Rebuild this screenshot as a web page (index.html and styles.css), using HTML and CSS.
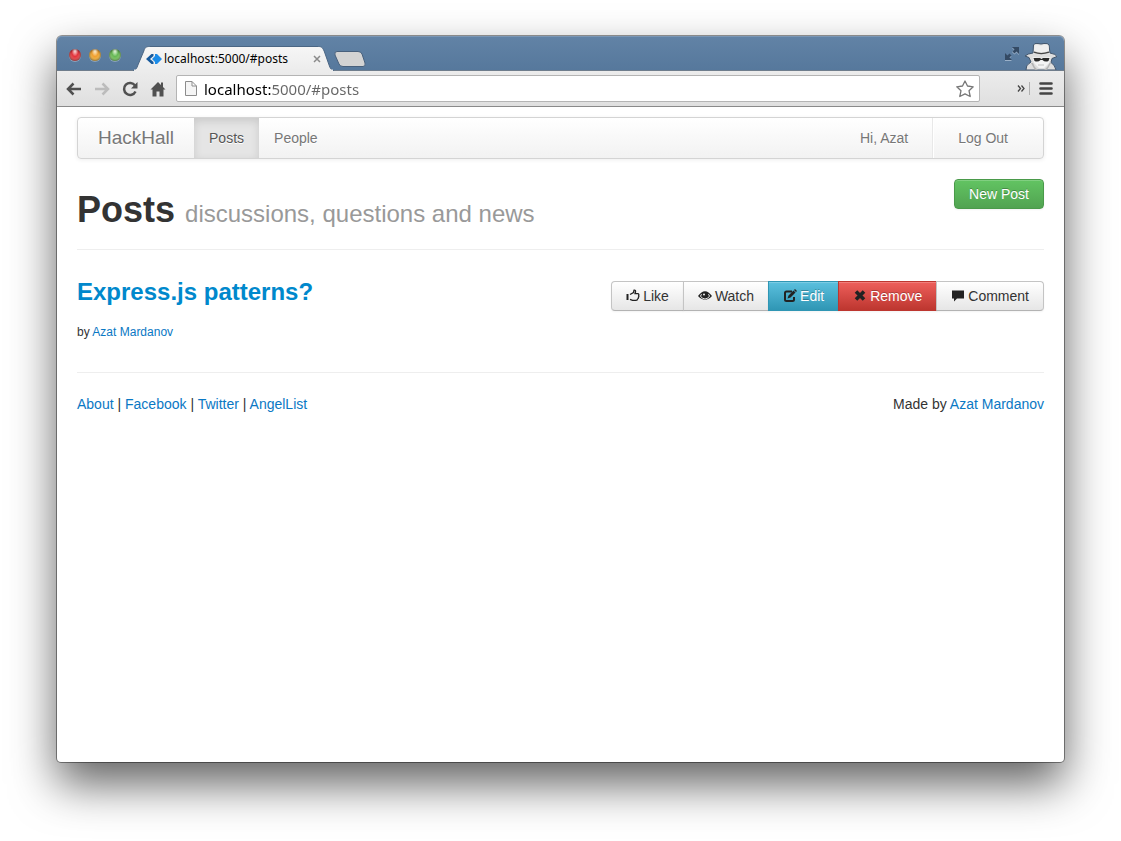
FILE: index.html
```html
<!DOCTYPE html>
<html lang="en">
<head>
    <meta charset="UTF-8">
    <meta name="viewport" content="width=device-width, initial-scale=1.0">
    <title>HackHall</title>
    <link rel="stylesheet" href="styles.css">
</head>
<body>
<div class="window">

    <div class="titlebar">
        <div class="lights">
            <button class="light red" type="button" aria-label="Close"></button>
            <button class="light yellow" type="button" aria-label="Minimize"></button>
            <button class="light green" type="button" aria-label="Zoom"></button>
        </div>
        <div class="tab">
            <svg class="tab-shape" viewBox="0 0 204 25" preserveAspectRatio="none" aria-hidden="true">
                <defs><linearGradient id="tabfill" x1="0" y1="0" x2="0" y2="1"><stop offset="0" stop-color="#f6f6f6"/><stop offset="1" stop-color="#ececec"/></linearGradient></defs>
                <path d="M0 25 C3 24 4 22 5 19 L11 5 C12 1 14 .5 17 .5 H188 C191 .5 192 1 194 5 L199 19 C200 22 201 24 204 25 Z" fill="url(#tabfill)" stroke="#4a6583" stroke-width="1"/>
                <path d="M1 24.5 H203" stroke="#ececec" stroke-width="2"/>
            </svg>
            <svg class="favicon" width="16" height="12" viewBox="0 0 16 12" aria-hidden="true">
                <path d="M5.500 1 L0 6 L5.500 11 H7.500 V9 L4 6 L7.500 3 V1 Z" fill="#16599c"/>
                <path d="M9 1 H11 L16 6 L11 11 H9 V9 L6 6 L9 3 Z" fill="#1c8ce8"/>
            </svg>
            <span class="tab-title">localhost:5000/#posts</span>
            <button class="tab-close" type="button" aria-label="Close tab">
                <svg width="8" height="8" viewBox="0 0 8 8"><path d="M1 1 L7 7 M7 1 L1 7" stroke="#8a8a8a" stroke-width="1.500"/></svg>
            </button>
        </div>
        <button class="new-tab" type="button" aria-label="New tab">
            <svg width="32" height="16" viewBox="0 0 32 16"><path d="M3 .5 H24 Q27 .5 28 3 L31 12 Q32 15.500 29 15.500 H9 Q6 15.500 5 13 L1 4 Q0 .5 3 .5 Z" fill="#d3d3d3" stroke="#48607c"/></svg>
        </button>
        <button class="fullscreen" type="button" aria-label="Full screen">
            <svg width="16" height="16" viewBox="0 0 16 16">
                <path d="M8 2 H15 V9 L12.500 6.500 L10.500 8.500 L8 6 L10 4 Z M1 8 L3.500 10.500 L5.500 8.500 L7.500 10.500 L5.500 12.500 L8 15 H1 Z" fill="#9ab0c8"/>
                <path d="M8 1 H15 V8 L12.500 5.500 L10.500 7.500 L8.500 5.500 L10.500 3.500 Z M1 7 L3.500 9.500 L5.500 7.500 L7.500 9.500 L5.500 11.500 L8 14 H1 Z" fill="#344a64"/>
            </svg>
        </button>
        <svg class="incognito" width="34" height="28" viewBox="0 0 34 28" aria-hidden="true">
            <path d="M2 28 Q2 23 5 21.500 L7 20 L5 15.500 L1 14 Q4 11.500 9 11 L9.500 3 Q10 1 14 1.500 Q17 2.500 20 1.500 Q24 1 25 3 L26 11 Q32 12 33 14.500 L28 16.500 L27 20.500 Q31 23 32 28 Z" fill="#dedede" stroke="#41556c"/>
            <path d="M10.500 3.500 Q12 2 14 3 Q17 4 20 2.500 Q23 2 24.500 3.500 L25 9 Q17 11.500 10 9 Z" fill="#efefef"/>
            <path d="M10 10.200 Q17 13 25 10.200" fill="none" stroke="#444" stroke-width="1.400"/>
            <path d="M8.500 15 Q17 16.500 26.500 15 L25 21 L20 26 H15 L10 21 Z" fill="#f4f4f4"/>
            <path d="M9.500 16 H16 L17.500 17 L19 16 H25.500 L24.500 19 Q21 20.500 18.500 18 H16.500 Q14 20.500 10.500 19 Z" fill="#2a2a2a"/>
            <path d="M14 23 H20" fill="none" stroke="#c2c2c2"/>
            <path d="M7 21 Q9 25 11 28 H14 Q10 25 9 21 Z M27 21 Q25 25 23 28 H20 Q24 25 25.500 21 Z" fill="#b4b4b4"/>
        </svg>
    </div>

    <div class="toolbar">
        <button class="tool" type="button" aria-label="Back">
            <svg width="16" height="14" viewBox="0 0 16 14"><path d="M7.500 1.500 L2 7 L7.500 12.500 M2.500 7 H15" fill="none" stroke="#505050" stroke-width="2.500"/></svg>
        </button>
        <button class="tool" type="button" aria-label="Forward" disabled>
            <svg width="16" height="14" viewBox="0 0 16 14"><path d="M8.500 1.500 L14 7 L8.500 12.500 M13.500 7 H1" fill="none" stroke="#bcbcbc" stroke-width="2.500"/></svg>
        </button>
        <button class="tool" type="button" aria-label="Reload">
            <svg width="16" height="16" viewBox="0 0 16 16"><path d="M13 4.500 A6 6 0 1 0 13.500 10.500" fill="none" stroke="#505050" stroke-width="2.500"/><path d="M15.500 1 V7.500 H9 Z" fill="#505050"/></svg>
        </button>
        <button class="tool" type="button" aria-label="Home">
            <svg width="16" height="16" viewBox="0 0 16 16"><path d="M8 1 L11 4 V1.500 H13 V6 L15.500 8.500 H13.500 V15.500 H9.500 V10.500 H6.500 V15.500 H2.500 V8.500 H.5 Z" fill="#505050"/></svg>
        </button>
        <div class="address">
            <svg width="12" height="15" viewBox="0 0 12 15" aria-hidden="true"><path d="M.5 .5 H7 L11.500 5 V14.500 H.5 Z M7 .5 V5 H11.500" fill="#f5f5f5" stroke="#8c8c8c"/></svg>
            <input class="url" type="text" aria-label="Address" value="localhost:5000/#posts">
            <button class="star" type="button" aria-label="Bookmark">
                <svg width="18" height="18" viewBox="0 0 18 18"><path d="M9 1 L11.500 6 L17.200 6.800 L13 10.700 L14.200 16.500 L9 13.800 L3.800 16.500 L5 10.700 L.8 6.800 L6.500 6 Z" fill="#fff" stroke="#777" stroke-width="1.300" stroke-linejoin="round"/></svg>
            </button>
        </div>
        <button class="more" type="button" aria-label="More extensions">
            <svg width="8" height="7" viewBox="0 0 8 7"><path d="M1 .5 L3.500 3.500 L1 6.500 M4.500 .5 L7 3.500 L4.500 6.500" fill="none" stroke="#444" stroke-width="1.300"/></svg>
        </button>
        <button class="menu" type="button" aria-label="Menu">
            <svg width="14" height="13" viewBox="0 0 14 13"><path d="M1.500 1.500 H12.500 M1.500 6.500 H12.500 M1.500 11.500 H12.500" stroke="#444" stroke-width="2.600" stroke-linecap="round"/></svg>
        </button>
    </div>

    <div class="page">
        <nav class="navbar">
            <a class="brand" href="#">HackHall</a>
            <a class="nav-link active" href="#posts">Posts</a>
            <a class="nav-link" href="#people">People</a>
            <a class="nav-link user" href="#profile">Hi, Azat</a>
            <a class="nav-link logout" href="#logout">Log Out</a>
        </nav>

        <header class="page-header">
            <h1>Posts <small>discussions, questions and news</small></h1>
            <button class="btn btn-success" type="button">New Post</button>
        </header>

        <article class="post">
            <div class="post-info">
                <h2><a href="#post">Express.js patterns?</a></h2>
                <p class="author">by <a href="#azat">Azat Mardanov</a></p>
            </div>
            <div class="btn-group">
                <button class="btn" type="button">
                    <svg width="14" height="14" viewBox="0 0 14 14"><path d="M4 5.500 L7.500 3.500 L8 1.200 Q9.800 .8 9.500 3 L9 4.700 H12 Q13.300 5.200 12.600 6.500 Q13.200 7.500 12.400 8.300 Q12.700 9.500 11.600 10 Q11.500 11.300 10 11.300 H6.500 L4 10.300" fill="none" stroke="#222" stroke-width="1.300"/><path d="M.5 5 H2.500 V11 H.5 Z" fill="#222"/></svg>
                    Like
                </button>
                <button class="btn" type="button">
                    <svg width="14" height="14" viewBox="0 0 14 14"><path d="M0 7 Q7 -2.500 14 7 Q7 14.500 0 7 Z" fill="#222"/><path d="M3.500 5.200 Q1 7 4.500 9.300 Q7 10.800 9.500 9.300 Q13 7 10.500 5.200" fill="none" stroke="#f3f3f3" stroke-width="1"/><circle cx="6" cy="5.500" r="1" fill="#f3f3f3"/></svg>
                    Watch
                </button>
                <button class="btn btn-info" type="button">
                    <svg width="14" height="14" viewBox="0 0 14 14"><path d="M9 2.500 H3.500 Q2 2.500 2 4 V10.500 Q2 12 3.500 12 H9.500 Q11 12 11 10.500 V8" fill="none" stroke="#222" stroke-width="2"/><path d="M4.500 9.500 L5.500 6.500 L10.500 1.500 L12.500 3.500 L7.500 8.500 Z M11 1 L12 0 L14 2 L13 3 Z" fill="#222"/></svg>
                    Edit
                </button>
                <button class="btn btn-danger" type="button">
                    <svg width="14" height="14" viewBox="0 0 14 14"><path d="M3 2.500 L11 10.500 M11 2.500 L3 10.500" stroke="#222" stroke-width="3.600"/></svg>
                    Remove
                </button>
                <button class="btn" type="button">
                    <svg width="14" height="14" viewBox="0 0 14 14"><path d="M1 1.500 H13 V9.500 H6 L3 12.500 V9.500 H1 Z" fill="#222"/></svg>
                    Comment
                </button>
            </div>
        </article>

        <footer class="footer">
            <div><a href="#about">About</a> | <a href="#facebook">Facebook</a> | <a href="#twitter">Twitter</a> | <a href="#angellist">AngelList</a></div>
            <div>Made by <a href="#azat">Azat Mardanov</a></div>
        </footer>
    </div>

</div>
</body>
</html>
```
FILE: styles.css
```css
* {
    box-sizing: border-box;
}

body {
    margin: 0;
    padding: 36px 57px 79px;
    background: #fff;
    color: #333;
    font-family: "Liberation Sans", Arial, sans-serif;
    font-size: 14px;
    line-height: 20px;
}

button {
    border: none;
    padding: 0;
    background: none;
    font: inherit;
}

svg {
    display: block;
}

a {
    color: #0a78c4;
    text-decoration: none;
}

/* browser window */
.window {
    min-height: calc(100vh - 115px);
    border-radius: 5px 5px 4px 4px;
    background: #fff;
    box-shadow: 0 0 0 1px rgba(0, 0, 0, 0.4), 0 22px 46px rgba(0, 0, 0, 0.62);
}

.titlebar {
    display: flex;
    align-items: flex-end;
    height: 35px;
    padding: 0 6px 0 12px;
    border-radius: 5px 5px 0 0;
    border-bottom: 1px solid #6f7d8c;
    background: linear-gradient(#6283a6, #56789c);
    box-shadow: inset 0 1px 0 #7b97b5;
}

.lights {
    display: flex;
    gap: 8px;
    padding-bottom: 9px;
}

.light {
    width: 12px;
    height: 12px;
    border-radius: 50%;
    box-shadow: inset 0 0 2px 1px rgba(0, 0, 0, 0.4), 0 1px 0 rgba(255, 255, 255, 0.3);
}

.red {
    background: radial-gradient(ellipse at 50% 15%, #fbd5d5 5%, #e3343c 40%, #ff9a92);
}

.yellow {
    background: radial-gradient(ellipse at 50% 15%, #fdebc8 5%, #f0a030 40%, #ffe88a);
}

.green {
    background: radial-gradient(ellipse at 50% 15%, #e0f5d8 5%, #66b855 40%, #c8f5a8);
}

.tab {
    position: relative;
    display: flex;
    align-items: center;
    width: 201px;
    height: 25px;
    margin: 0 0 -1px 12px;
    padding: 0 13px;
}

.tab-shape {
    position: absolute;
    inset: 0;
    width: 100%;
    height: 100%;
}

.favicon,
.tab-title,
.tab-close {
    position: relative;
}

.tab-title {
    flex: 1;
    padding-left: 2px;
    color: #000;
    font: 12px/16px "Noto Sans", sans-serif;
}

.new-tab {
    margin-bottom: 3px;
}

.fullscreen {
    margin: 0 4px 8px auto;
}

.toolbar {
    display: flex;
    align-items: center;
    gap: 12px;
    height: 36px;
    padding: 0 11px 0 9px;
    border-bottom: 1px solid #8a8a8a;
    background: linear-gradient(#ececec, #dfdfdf);
}

.address {
    display: flex;
    flex: 1;
    align-items: center;
    gap: 7px;
    height: 27px;
    margin: 0 25px 0 -2px;
    padding: 0 5px 0 8px;
    border: 1px solid #b4b4b4;
    border-radius: 2px;
    background: #fff;
}

.url {
    flex: 1;
    min-width: 0;
    border: none;
    padding: 0;
    outline: none;
    font: 15px/20px "Noto Sans", sans-serif;
    /* host in black, rest of the address in grey */
    color: transparent;
    background: linear-gradient(90deg, #000 67px, #666 67px);
    -webkit-background-clip: text;
    background-clip: text;
}

.menu {
    margin-left: -8px;
    padding-left: 9px;
    border-left: 1px solid #b0b0b0;
}

/* page */
.page {
    padding: 10px 20px;
}

.navbar {
    display: flex;
    height: 42px;
    border: 1px solid #d4d4d4;
    border-radius: 4px;
    background: linear-gradient(#fff, #f2f2f2);
    box-shadow: 0 1px 4px rgba(0, 0, 0, 0.07);
    line-height: 40px;
    text-shadow: 0 1px 0 #fff;
}

.brand {
    padding: 0 20px;
    color: #777;
    font-size: 19px;
}

.nav-link {
    padding: 0 15px;
    color: #777;
}

.active {
    background: #e5e5e5;
    box-shadow: inset 0 3px 8px rgba(0, 0, 0, 0.125);
    color: #555;
}

.user {
    margin-left: auto;
    padding: 0 24px;
    border-right: 1px solid #e8e8e8;
}

.logout {
    padding: 0 35px 0 24px;
    border-left: 1px solid #fff;
}

.page-header {
    display: flex;
    justify-content: space-between;
    align-items: flex-start;
    padding: 20px 0 15px;
    border-bottom: 1px solid #eee;
}

h1 {
    margin: 11px 0 0;
    font-size: 36px;
    line-height: 40px;
}

h1 small {
    color: #999;
    font-size: 24px;
    font-weight: normal;
}

.btn {
    height: 30px;
    padding: 0 14px;
    border: 1px solid #c4c4c4;
    border-bottom-color: #b3b3b3;
    border-radius: 4px;
    background: linear-gradient(#fff, #e6e6e6);
    box-shadow: inset 0 1px 0 rgba(255, 255, 255, 0.2), 0 1px 2px rgba(0, 0, 0, 0.05);
    color: #333;
}

.btn-success {
    border-color: #4a9a4a;
    background: linear-gradient(#62c462, #51a351);
    color: #fff;
    text-shadow: 0 -1px 0 rgba(0, 0, 0, 0.25);
}

.post {
    display: flex;
    justify-content: space-between;
    align-items: flex-start;
    padding: 22px 0 30px;
    border-bottom: 1px solid #eee;
}

h2 {
    margin: 0 0 10px;
    font-size: 24px;
    line-height: 40px;
}

h2 a {
    color: #08c;
}

.author {
    margin: 0;
    font-size: 12px;
}

.btn-group {
    display: flex;
    padding-top: 9px;
}

.btn-group .btn {
    display: flex;
    align-items: center;
    gap: 3px;
    margin-left: -1px;
    border-radius: 0;
}

.btn-group .btn:first-child {
    border-radius: 4px 0 0 4px;
}

.btn-group .btn:last-child {
    border-radius: 0 4px 4px 0;
}

.btn-group .btn-info {
    border-color: #2f96b4;
    background: linear-gradient(#5bc0de, #2f96b4);
    color: #fff;
    text-shadow: 0 -1px 0 rgba(0, 0, 0, 0.25);
}

.btn-group .btn-danger {
    border-color: #bd362f;
    background: linear-gradient(#ee5f5b, #bd362f);
    color: #fff;
    text-shadow: 0 -1px 0 rgba(0, 0, 0, 0.25);
}

.footer {
    display: flex;
    justify-content: space-between;
    padding: 21px 0;
}
```
